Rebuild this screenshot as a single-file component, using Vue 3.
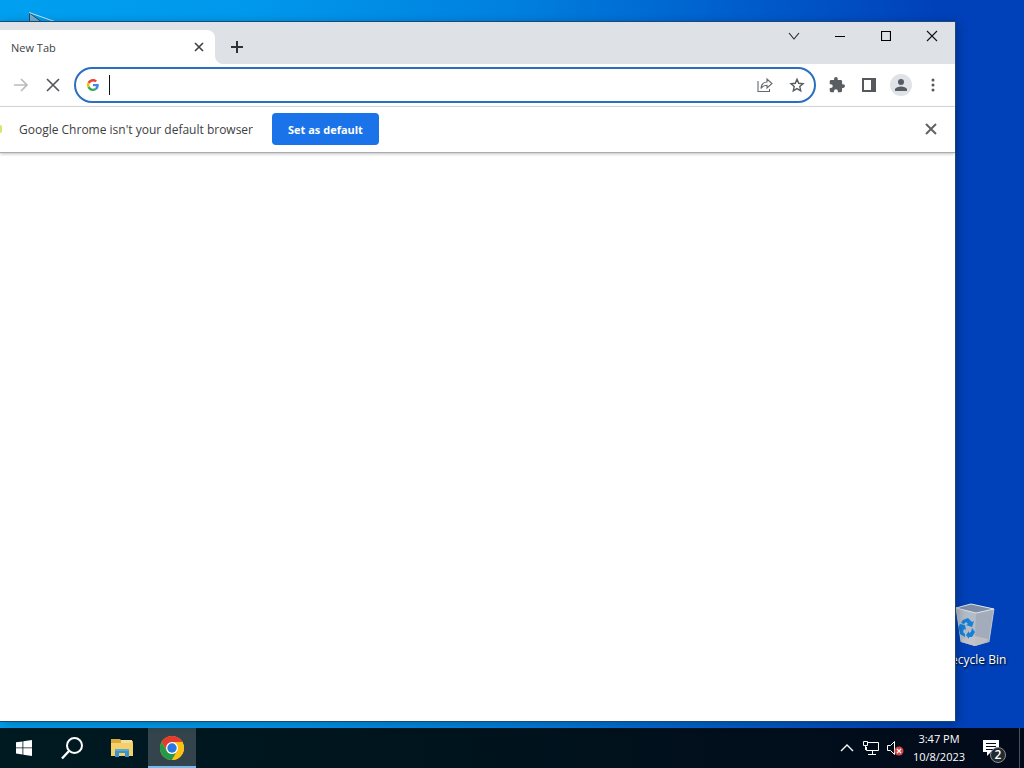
<script setup>
import { ref } from 'vue'

const address = ref('')
const promptOpen = ref(true)
const time = '3:47 PM'
const date = '10/8/2023'
const notifications = 2
</script>

<template>
  <div class="screen">
    <main class="desktop">
      <svg class="shortcut" viewBox="0 0 34 24" aria-hidden="true">
        <path d="M1.500 1v22h30z" fill="#72aecb" stroke="#244a63" />
        <path d="M1 .5L28 10" fill="none" stroke="#c4e2f0" />
      </svg>

      <a href="#" class="recycle-bin">
        <svg width="40" height="44" viewBox="0 0 40 44" aria-hidden="true">
          <path d="M1 5L16 1l23 5-5 33-14 4-14-4z" fill="#a9b3c2" />
          <path d="M1 5l20 5-1 33-14-4z" fill="#b4bcc8" />
          <path d="M21 10l18-4-5 33-14 4z" fill="#a3acba" />
          <path d="M1 5L16 1l23 5-18 4z" fill="#7d8da6" stroke="#dce3ea" />
          <path d="M7 36l13-3 13 3-1 3-12 4-13-4z" fill="#c9c7c6" opacity=".7" />
          <path d="M1 5l5 34M39 6l-5 33" fill="none" stroke="#d5dbe3" opacity=".6" />
          <g fill="#1580d8">
            <path d="M8 17l5-2 4 4 2-1-2 6-6-2 2-1-2-2-2 2-3-1z" />
            <path d="M5 21l5 1 1 5-2-1-1 3 2 2v3l-5-3-1-5-1-1z" />
            <path d="M17 25l3 4-3 5h-3v2l-3-4 3-4v2l2-1z" />
          </g>
        </svg>
        <span>Recycle Bin</span>
      </a>

      <section class="window" aria-label="New Tab">
        <header class="tab-strip">
          <div class="tab">
            <span class="tab-title">New Tab</span>
            <button class="tab-close" aria-label="Close tab">
              <svg width="10" height="10" viewBox="0 0 10 10"><path d="M1 1l8 8M9 1L1 9" stroke="#3c4043" stroke-width="1.600" /></svg>
            </button>
          </div>
          <svg class="tab-flare" width="8" height="8" viewBox="0 0 8 8" aria-hidden="true"><path d="M0 0a8 8 0 008 8H0z" fill="#fff" /></svg>
          <button class="new-tab" aria-label="Open new tab">
            <svg width="14" height="14" viewBox="0 0 14 14"><path d="M7 1v12M1 7h12" stroke="#303336" stroke-width="2" /></svg>
          </button>
          <div class="window-controls">
            <button aria-label="Search tabs">
              <svg width="12" height="12" viewBox="0 0 12 12"><path d="M1 3l5 6 5-6" fill="none" stroke="#222" stroke-width="1.100" /></svg>
            </button>
            <button aria-label="Minimize">
              <svg width="10" height="10" viewBox="0 0 10 10"><path d="M0 5.500h10" stroke="#000" /></svg>
            </button>
            <button aria-label="Maximize">
              <svg width="10" height="10" viewBox="0 0 10 10"><path d="M.5.5h9v9h-9z" fill="none" stroke="#000" stroke-width="1.200" /></svg>
            </button>
            <button aria-label="Close">
              <svg width="12" height="12" viewBox="0 0 12 12"><path d="M1 1l10 10M11 1L1 11" stroke="#111" stroke-width="1.100" /></svg>
            </button>
          </div>
        </header>

        <nav class="toolbar">
          <button class="tool" aria-label="Forward" disabled>
            <svg width="16" height="16" viewBox="0 0 16 16"><path d="M1 8h13M8 2l6 6-6 6" fill="none" stroke="#b9bbbd" stroke-width="1.700" /></svg>
          </button>
          <button class="tool" aria-label="Stop loading">
            <svg width="14" height="14" viewBox="0 0 14 14"><path d="M1 1l12 12M13 1L1 13" stroke="#55585c" stroke-width="1.700" /></svg>
          </button>
          <div class="omnibox">
            <svg width="12" height="12" viewBox="0 0 48 48" aria-hidden="true">
              <path fill="#ea4335" d="M24 9.500c3.500 0 6.700 1.200 9.200 3.600l6.900-6.900C35.900 2.400 30.500 0 24 0 14.600 0 6.500 5.400 2.600 13.200l8 6.200C12.400 13.700 17.700 9.500 24 9.500z" />
              <path fill="#4285f4" d="M47 24.600c0-1.600-.2-3.100-.4-4.600H24v9h12.900c-.6 3-2.300 5.500-4.700 7.200l7.700 6C44.400 38 47 31.800 47 24.600z" />
              <path fill="#fbbc05" d="M10.500 28.600a14.500 14.500 0 010-9.200l-8-6.200a24 24 0 000 21.600z" />
              <path fill="#34a853" d="M24 48c6.500 0 11.900-2.100 15.900-5.800l-7.700-6c-2.200 1.500-4.900 2.300-8.200 2.300-6.300 0-11.600-4.200-13.500-9.900l-8 6.200C6.500 42.600 14.600 48 24 48z" />
            </svg>
            <span class="caret"></span>
            <input v-model="address" type="text" aria-label="Address and search bar" />
            <button class="tool" aria-label="Share this page">
              <svg width="16" height="16" viewBox="0 0 16 16" fill="none" stroke="#65686c" stroke-width="1.100">
                <path d="M1 4v10.500h11.500V12" />
                <path d="M4 11.500c.3-4 2.500-6.200 6-6.500V2l5 4.500-5 4.500V8.200c-2.700 0-4.600 1-6 3.300z" />
              </svg>
            </button>
            <button class="tool" aria-label="Bookmark this tab">
              <svg width="16" height="16" viewBox="0 0 16 16"><path d="M8 2.300l1.700 4 4.300.4-3.200 2.900.9 4.200L8 11.600l-3.700 2.200.9-4.200L2 6.700l4.300-.4z" fill="none" stroke="#55585c" stroke-width="1.400" /></svg>
            </button>
          </div>
          <button class="tool" aria-label="Extensions">
            <svg width="16" height="16" viewBox="1 1 22 22"><path fill="#5a5d61" d="M20.500 11H19V7a2 2 0 00-2-2h-4V3.500a2.500 2.500 0 00-5 0V5H4a2 2 0 00-2 2v3.800h1.500a2.700 2.700 0 010 5.400H2V20a2 2 0 002 2h3.800v-1.500a2.700 2.700 0 015.400 0V22H17a2 2 0 002-2v-4h1.500a2.500 2.500 0 000-5z" /></svg>
          </button>
          <button class="tool" aria-label="Side panel">
            <svg width="14" height="14" viewBox="0 0 14 14"><path d="M1 1h12v12H1z" fill="none" stroke="#55585c" stroke-width="2" /><path d="M9 1h4v12H9z" fill="#55585c" /></svg>
          </button>
          <button class="tool" aria-label="Profile">
            <svg width="22" height="22" viewBox="0 0 22 22">
              <circle cx="11" cy="11" r="11" fill="#dfe3e8" />
              <circle cx="11" cy="8" r="3" fill="#565c62" />
              <path d="M5 17v-1.500c0-2 4-3 6-3s6 1 6 3V17z" fill="#565c62" />
            </svg>
          </button>
          <button class="tool" aria-label="Menu">
            <svg width="4" height="14" viewBox="0 0 4 14" fill="#55585c"><circle cx="2" cy="2" r="1.500" /><circle cx="2" cy="7" r="1.500" /><circle cx="2" cy="12" r="1.500" /></svg>
          </button>
        </nav>

        <div v-if="promptOpen" class="infobar">
          <span class="infobar-logo"></span>
          <span class="infobar-text">Google Chrome isn't your default browser</span>
          <button class="set-default">Set as default</button>
          <button class="tool dismiss" aria-label="Dismiss" @click="promptOpen = false">
            <svg width="12" height="12" viewBox="0 0 12 12"><path d="M1 1l10 10M11 1L1 11" stroke="#5f6368" stroke-width="2" /></svg>
          </button>
        </div>
        <div class="page"></div>
      </section>
    </main>

    <footer class="taskbar">
      <button class="task" aria-label="Start">
        <svg width="16" height="16" viewBox="0 0 16 16" fill="#fff"><path d="M0 2.300l6.500-.9v6.100H0zM7.300 1.300L16 0v7.500H7.300zM0 8.300h6.500v6.200L0 13.600zM7.300 8.300H16V16l-8.700-1.300z" /></svg>
      </button>
      <button class="task" aria-label="Search">
        <svg width="24" height="24" viewBox="0 0 24 24" fill="none" stroke="#fff"><circle cx="14.500" cy="9.500" r="7.500" stroke-width="2" /><path d="M9 15l-7 7.500" stroke-width="2.400" /></svg>
      </button>
      <button class="task" aria-label="File Explorer">
        <svg width="22" height="20" viewBox="0 0 22 20">
          <path d="M0 1h9l2 2h11v15H0z" fill="#dca73c" />
          <path d="M0 5h22v13H0z" fill="#f5d068" />
          <path d="M10 2h11v3H10z" fill="#f5dfa0" />
          <path d="M4 11h14v8h-4v-4H8v4H4z" fill="#3b93cc" />
          <path d="M4 11h14v2H4z" fill="#5aa6d4" />
        </svg>
      </button>
      <button class="task active" aria-label="Google Chrome">
        <svg width="24" height="24" viewBox="0 0 24 24">
          <circle cx="12" cy="12" r="12" fill="#fbc116" />
          <path d="M12 12L7 15 1.600 6A12 12 0 0122.400 6H12z" fill="#e33b2e" />
          <path d="M1.600 6l5.200 9a6 6 0 0010.400 0L12 24A12 12 0 011.600 6z" fill="#229a4a" />
          <path d="M22.400 6H12l5.200 9L12 24A12 12 0 0022.400 6z" fill="#fbc116" />
          <circle cx="12" cy="12" r="6" fill="#fff" />
          <circle cx="12" cy="12" r="4.700" fill="#2878e4" />
        </svg>
      </button>

      <div class="tray">
        <button class="tray-icon" aria-label="Show hidden icons">
          <svg width="14" height="8" viewBox="0 0 14 8"><path d="M1 7l6-6 6 6" fill="none" stroke="#fff" stroke-width="1.400" /></svg>
        </button>
        <button class="tray-icon" aria-label="Network">
          <svg width="16" height="14" viewBox="0 0 16 14" fill="none" stroke="#fff"><path d="M5 1.500h10.500v8h-12V6M9.500 9.500v4M5 13.500h8M.5.5h4v4h-4zM2.500 4.500V9" /></svg>
        </button>
        <button class="tray-icon" aria-label="Volume muted">
          <svg width="18" height="16" viewBox="0 0 18 16">
            <path d="M1.500 5.500h3l4-4v13l-4-4h-3z" fill="none" stroke="#fff" />
            <circle cx="13" cy="11" r="4.500" fill="#d64545" />
            <path d="M11 9l4 4M15 9l-4 4" stroke="#fff" stroke-width="1.200" />
          </svg>
        </button>
        <button class="clock">
          <span>{{ time }}</span>
          <span>{{ date }}</span>
        </button>
        <button class="action-center" aria-label="Notifications">
          <svg width="16" height="17" viewBox="0 0 16 17"><path d="M0 0h16v12H8l-4 4v-4H0z" fill="#fff" /><path d="M3 3.500h10M3 6.500h10M3 9.500h7" stroke="#050b18" /></svg>
          <span class="badge">{{ notifications }}</span>
        </button>
        <button class="show-desktop" aria-label="Show desktop"></button>
      </div>
    </footer>
  </div>
</template>

<style>
body {
  margin: 0;
}
</style>

<style scoped>
.screen {
  display: flex;
  flex-direction: column;
  height: 100vh;
  overflow: hidden;
  font-family: "Open Sans", "Noto Sans", sans-serif;
  font-size: 11px;
}

button {
  display: flex;
  align-items: center;
  justify-content: center;
  flex-shrink: 0;
  padding: 0;
  border: none;
  background: none;
  color: inherit;
  font: inherit;
}

.desktop {
  position: relative;
  flex: 1;
  background: linear-gradient(90deg, #009fef 0%, #0098ec 25%, #0080df 50%, #0059c9 75%, #0040b8 92%, #0040b8 100%);
}

.shortcut {
  position: absolute;
  top: 12px;
  left: 28px;
  width: 34px;
}

.recycle-bin {
  position: absolute;
  right: 12px;
  bottom: 60px;
  display: flex;
  flex-direction: column;
  align-items: center;
  width: 74px;
  gap: 5px;
  color: #fff;
  font-size: 12px;
  line-height: 16px;
  text-decoration: none;
  text-shadow: 1px 1px 2px #000;
  white-space: nowrap;
}

.window {
  position: absolute;
  inset: 22px 69px 7px 0;
  display: flex;
  flex-direction: column;
  background: #fff;
  box-shadow: 0 0 0 1px #174a78, 2px 2px 10px rgba(0, 0, 0, 0.3);
}

.tab-strip {
  display: flex;
  height: 42px;
  background: #dee1e6;
}
.tab {
  display: flex;
  align-items: center;
  justify-content: space-between;
  width: 215px;
  margin-top: 8px;
  padding: 0 8px 0 11px;
  box-sizing: border-box;
  border-radius: 0 8px 0 0;
  background: #fff;
  color: #3c4043;
}
.tab-flare {
  align-self: flex-end;
}
.tab-close {
  width: 16px;
  height: 16px;
}
.new-tab {
  width: 28px;
  height: 28px;
  margin-top: 11px;
}
.window-controls {
  display: flex;
  margin-left: auto;
}
.window-controls button {
  width: 46px;
  height: 28px;
}

.toolbar {
  display: flex;
  align-items: center;
  height: 42px;
  padding: 0 6px 0 5px;
  border-bottom: 1px solid #dadce0;
}
.tool {
  width: 32px;
  height: 32px;
}
.omnibox {
  display: flex;
  align-items: center;
  flex: 1;
  height: 36px;
  margin: 0 5px;
  padding: 0 1px 0 11px;
  box-sizing: border-box;
  border: 2px solid #2a6fc0;
  border-radius: 18px;
}
.caret {
  width: 1px;
  height: 20px;
  margin-left: 10px;
  background: #111;
}
.omnibox input {
  flex: 1;
  min-width: 0;
  padding: 0;
  border: none;
  outline: none;
  background: none;
  font: inherit;
  font-size: 14px;
}

.infobar {
  display: flex;
  align-items: center;
  height: 44px;
  padding: 0 8px 1px 0;
  border-bottom: 1px solid #a9abae;
  box-shadow: 0 1px 3px rgba(0, 0, 0, 0.25);
  color: #3c4043;
  font-size: 12px;
}
.infobar-logo {
  width: 2px;
  height: 8px;
  border-radius: 0 4px 4px 0;
  background: #d5e66a;
}
.infobar-text {
  margin-left: 17px;
  white-space: nowrap;
}
.set-default {
  height: 32px;
  margin-left: 19px;
  padding: 0 16px;
  border-radius: 4px;
  background: #1a73e8;
  color: #fff;
  font-size: 11px;
  font-weight: 700;
}
.dismiss {
  margin-left: auto;
}
.page {
  flex: 1;
}

.taskbar {
  display: flex;
  gap: 2px;
  height: 40px;
  background: linear-gradient(90deg, #001a22, #00131d 50%, #020a1a);
  color: #fff;
}
.task {
  width: 48px;
}
.task:first-child {
  margin-right: -2px;
}
.task.active {
  box-sizing: border-box;
  padding-top: 2px;
  border-bottom: 2px solid #76b9ed;
  background: #33444c;
}
.tray {
  display: flex;
  margin-left: auto;
}
.tray-icon {
  width: 24px;
}
.clock {
  flex-direction: column;
  width: 64px;
  line-height: 18px;
}
.action-center {
  position: relative;
  width: 48px;
  padding-right: 8px;
  box-sizing: border-box;
}
.badge {
  position: absolute;
  top: 19px;
  left: 19px;
  width: 14px;
  height: 14px;
  border: 1px solid #8b9096;
  border-radius: 50%;
  background: #24292f;
  font-size: 12px;
  font-weight: 600;
  line-height: 14px;
  text-align: center;
}
.show-desktop {
  width: 5px;
  border-left: 1px solid #4a505c;
}
</style>
